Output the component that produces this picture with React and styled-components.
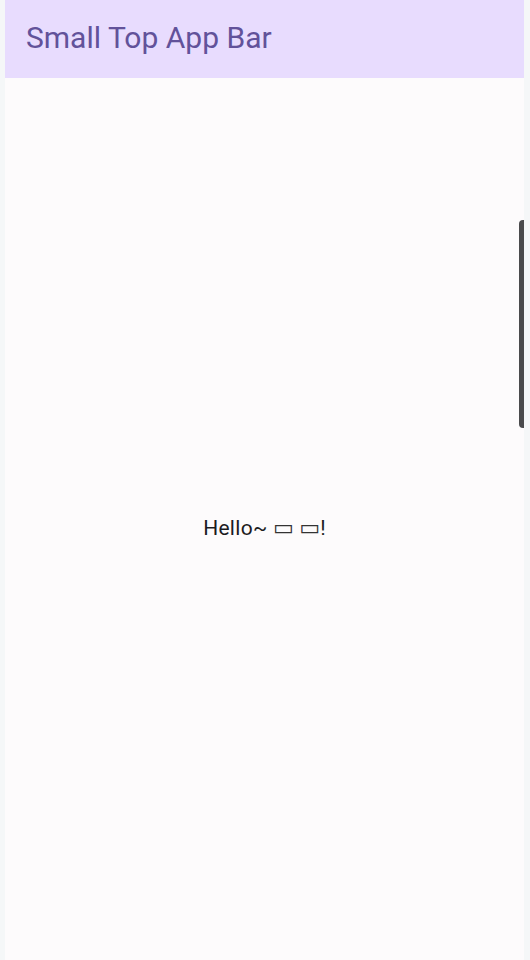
import React from "react";
import styled, { createGlobalStyle } from "styled-components";

const GlobalStyle = createGlobalStyle`
  html, body {
    margin: 0;
    padding: 0;
    background: #f5f7f8;
  }
  body {
    font-family: Roboto, "Noto Sans", sans-serif;
  }
`;

export default function App() {
  return (
    <>
      <GlobalStyle />
      <Screen>
        <TopBar>
          <Title>Small Top App Bar</Title>
        </TopBar>
        <Content>
          <Greeting>
            Hello~ <Tofu>▭</Tofu> <Tofu>▭</Tofu>!
          </Greeting>
        </Content>
        <ScrollHandle />
      </Screen>
    </>
  );
}

const Screen = styled.div`
  position: relative;
  margin: 0 6px 0 5px;
  height: 960px;
  display: flex;
  flex-direction: column;
  background: #fdfbfc;
  overflow: hidden;
`;

const TopBar = styled.header`
  height: 78px;
  flex-shrink: 0;
  display: flex;
  align-items: center;
  padding: 0 21px 3px;
  box-sizing: border-box;
  background: #e8dcfe;
`;

const Title = styled.h1`
  margin: 0;
  font-size: 30px;
  font-weight: 400;
  line-height: 36px;
  color: #62529a;
`;

const Content = styled.main`
  flex: 1;
  display: flex;
  align-items: center;
  justify-content: center;
  padding-top: 16px;
`;

const Greeting = styled.p`
  margin: 0;
  font-size: 21px;
  letter-spacing: 0.3px;
  color: #1c1b1f;
`;

const Tofu = styled.span`
  font-family: "DejaVu Sans", sans-serif;
  font-size: 22px;
  letter-spacing: 0;
  color: #333;
`;

const ScrollHandle = styled.div`
  position: absolute;
  right: 0;
  top: 220px;
  width: 5px;
  height: 208px;
  background: #4a4a4c;
  border-radius: 4px 0 0 4px;
`;
